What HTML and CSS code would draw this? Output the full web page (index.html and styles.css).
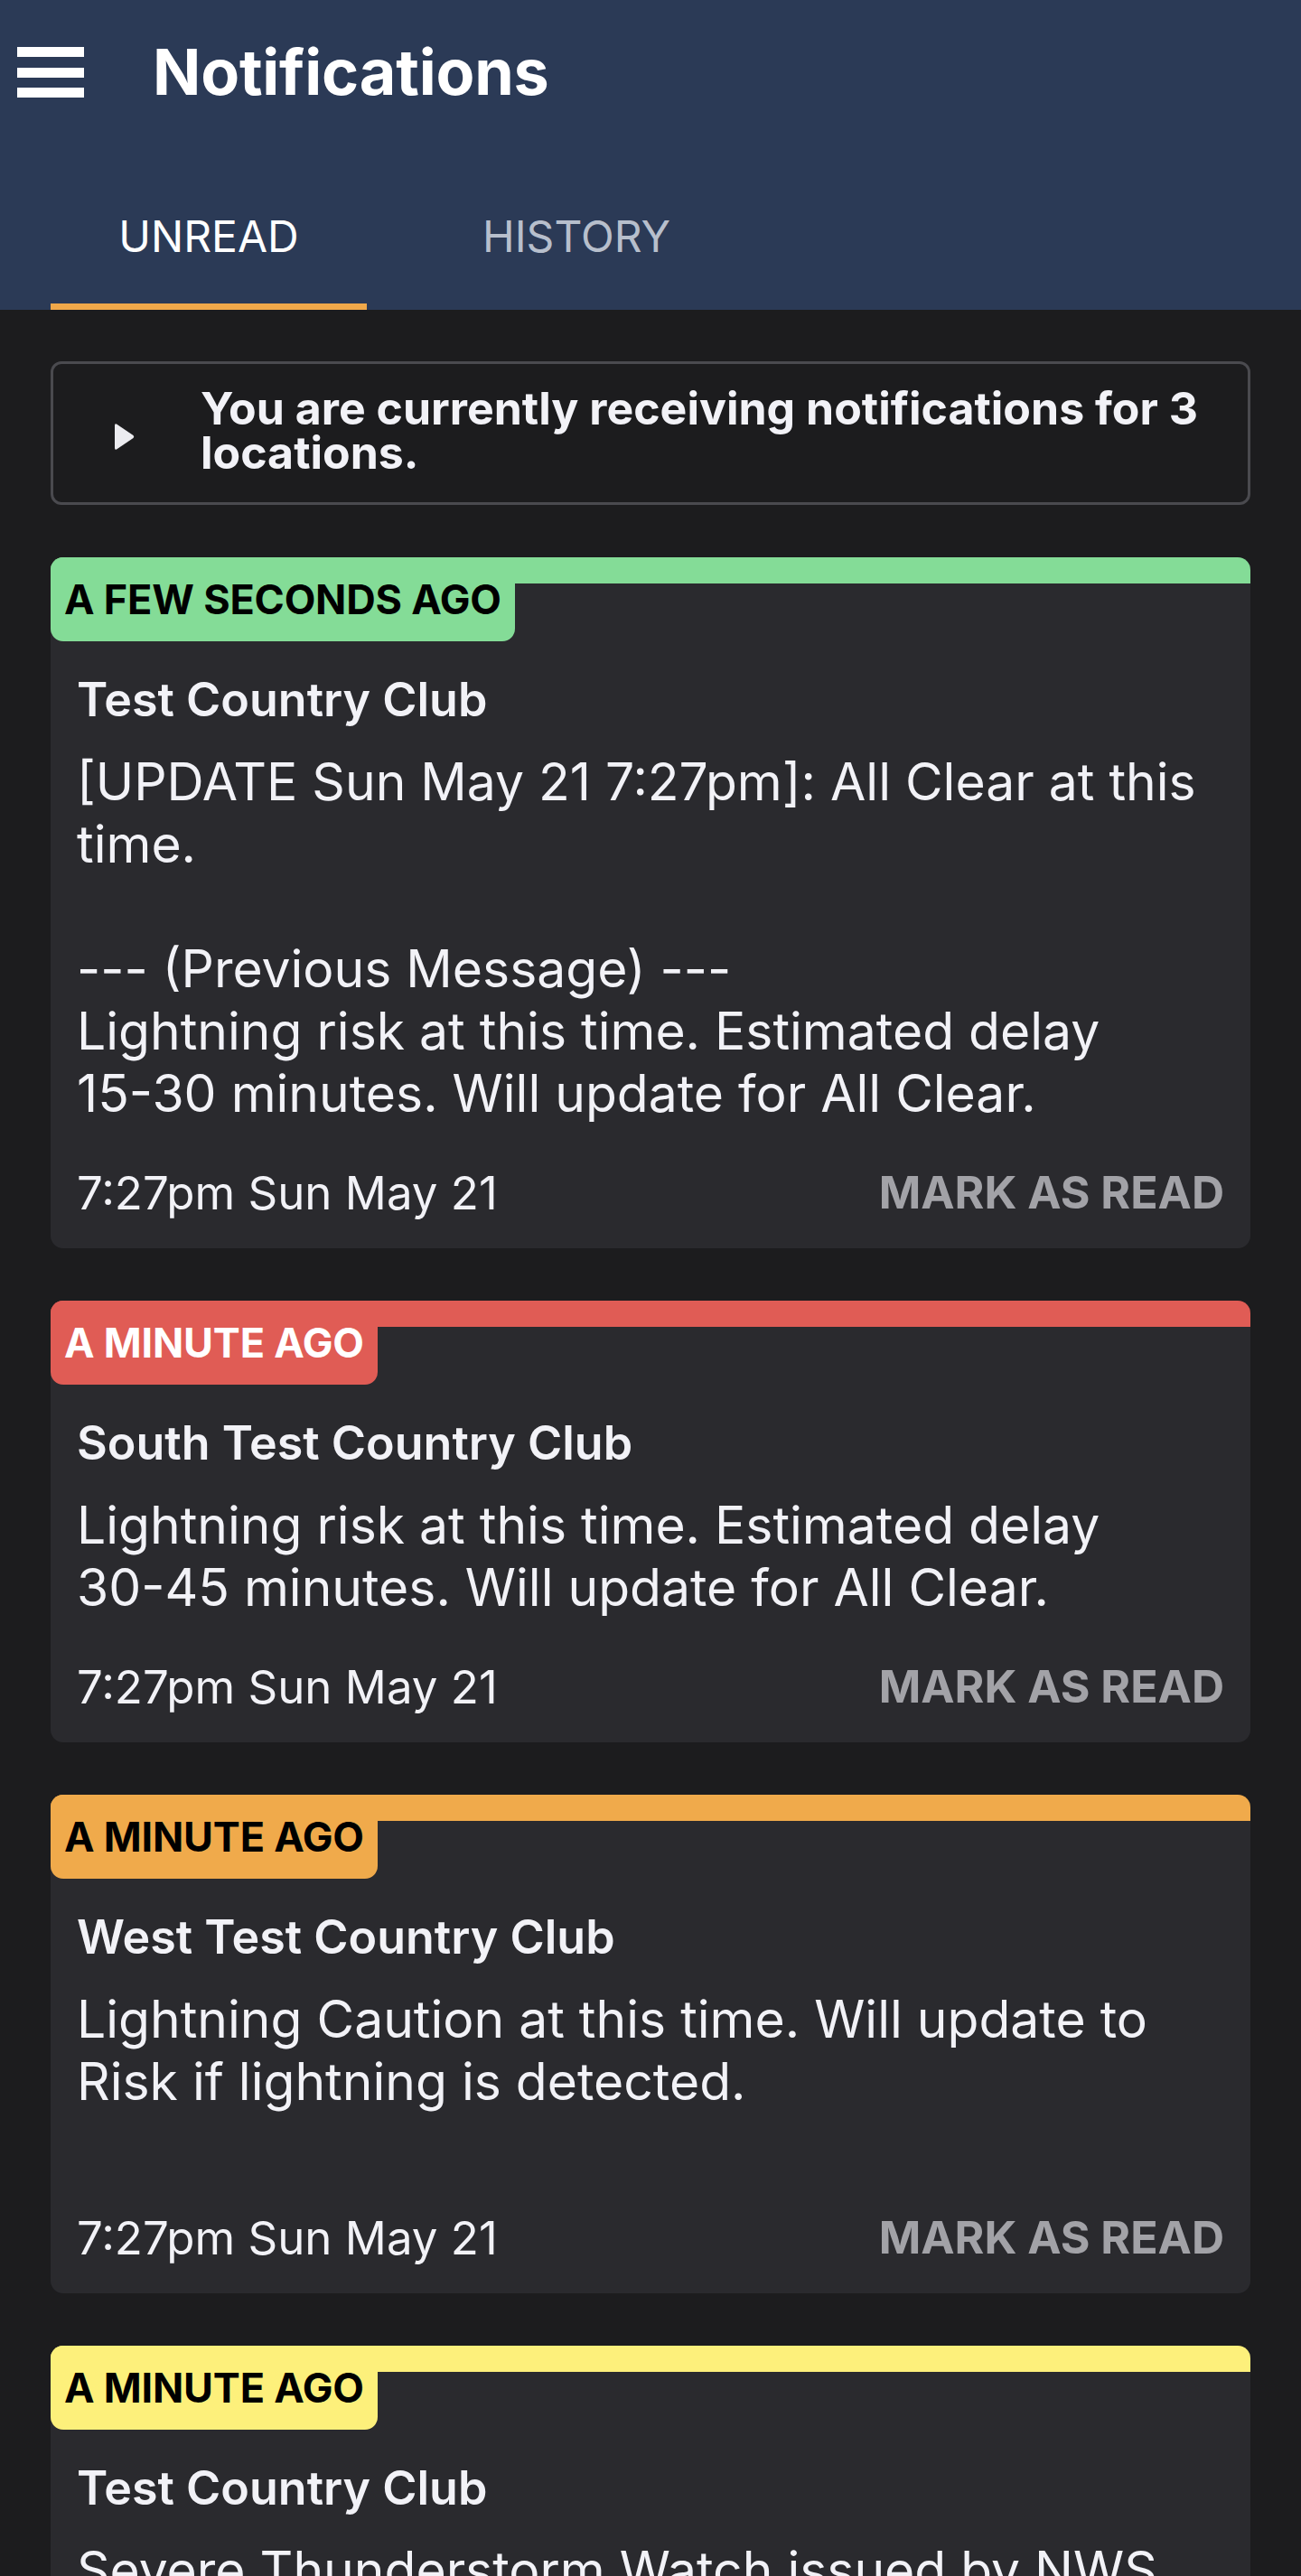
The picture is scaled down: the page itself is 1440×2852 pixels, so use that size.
FILE: index.html
```html
<!DOCTYPE html>
<html lang="en">
<head>
<meta charset="utf-8">
<title>Notifications</title>
<link rel="stylesheet" href="styles.css">
</head>
<body>
<header class="appbar">
  <div class="toolbar">
    <button class="menu-btn" aria-label="Menu">
      <span class="bar"></span><span class="bar"></span><span class="bar"></span>
    </button>
    <h1 class="title">Notifications</h1>
  </div>
  <nav class="tabs">
    <div class="tab tab-active">UNREAD</div>
    <div class="tab tab-second">HISTORY</div>
  </nav>
</header>

<main class="content">
  <div class="info-box">
    <svg class="caret" viewBox="0 0 22 31" width="22" height="31" aria-hidden="true">
      <path d="M2 1.5 L20.5 14 Q22 15.5 20.5 17 L2 29.5 Q0 30.5 0 28 L0 3 Q0 0.5 2 1.5 Z" fill="#ececf0"/>
    </svg>
    <p class="info-text">You are currently receiving notifications for 3 locations.</p>
  </div>

  <article class="card card-green">
    <div class="badge">A FEW SECONDS AGO</div>
    <h2 class="card-title">Test Country Club</h2>
    <p class="card-body">[UPDATE Sun May 21 7:27pm]: All Clear at this time.

--- (Previous Message) ---
Lightning risk at this time. Estimated delay <span class="nowrap">15-30</span> minutes. Will update for All Clear.</p>
    <div class="card-footer">
      <span class="date">7:27pm Sun May 21</span>
      <span class="mark">MARK AS READ</span>
    </div>
  </article>

  <article class="card card-red">
    <div class="badge">A MINUTE AGO</div>
    <h2 class="card-title">South Test Country Club</h2>
    <p class="card-body">Lightning risk at this time. Estimated delay <span class="nowrap">30-45</span> minutes. Will update for All Clear.</p>
    <div class="card-footer">
      <span class="date">7:27pm Sun May 21</span>
      <span class="mark">MARK AS READ</span>
    </div>
  </article>

  <article class="card card-orange">
    <div class="badge">A MINUTE AGO</div>
    <h2 class="card-title">West Test Country Club</h2>
    <p class="card-body card-body-trailing">Lightning Caution at this time. Will update to Risk if lightning is detected.</p>
    <div class="card-footer">
      <span class="date">7:27pm Sun May 21</span>
      <span class="mark">MARK AS READ</span>
    </div>
  </article>

  <article class="card card-yellow">
    <div class="badge">A MINUTE AGO</div>
    <h2 class="card-title">Test Country Club</h2>
    <p class="card-body">Severe Thunderstorm Watch issued by NWS Birmingham until 10:00pm CDT.</p>
    <div class="card-footer">
      <span class="date">7:26pm Sun May 21</span>
      <span class="mark">MARK AS READ</span>
    </div>
  </article>
</main>
</body>
</html>
```

FILE: styles.css
```css
* {
  box-sizing: border-box;
}

html, body {
  margin: 0;
  padding: 0;
}

body {
  background: #1c1c1e;
  font-family: "Inter", "Roboto", "Liberation Sans", sans-serif;
  color: #f2f2f7;
  width: 1440px;
  overflow: hidden;
}

/* ---------- App bar ---------- */
.appbar {
  background: #2b3a56;
  height: 343px;
  display: flex;
  flex-direction: column;
}

.toolbar {
  height: 180px;
  display: flex;
  align-items: center;
  padding: 0 0 20px 19px;
}

.menu-btn {
  background: none;
  border: 0;
  padding: 0;
  width: 74px;
  height: 56px;
  display: flex;
  flex-direction: column;
  justify-content: space-between;
  cursor: pointer;
}

.menu-btn .bar {
  display: block;
  height: 11px;
  width: 74px;
  background: #ffffff;
}

.title {
  margin: 0 0 0 76px;
  font-size: 70px;
  font-weight: 700;
  color: #ffffff;
  letter-spacing: -0.2px;
  line-height: 1;
}

.tabs {
  height: 163px;
  display: flex;
  padding-left: 56px;
}

.tab {
  width: 350px;
  height: 163px;
  padding-top: 6px;
  display: flex;
  align-items: center;
  justify-content: center;
  font-size: 48px;
  font-weight: 400;
  color: #b7bfcc;
  border-bottom: 7px solid transparent;
}

.tab-active {
  color: #ffffff;
  border-bottom-color: #f0a84a;
}

.tab-second {
  margin-left: 57px;
}

/* ---------- Content ---------- */
.content {
  padding: 57px 56px 0;
  display: flex;
  flex-direction: column;
  gap: 58px;
}

.info-box {
  height: 159px;
  border: 3px solid #4a4a4f;
  border-radius: 12px;
  display: flex;
  align-items: center;
  padding: 0 40px 0 68px;
  gap: 73px;
}

.caret {
  flex: none;
  margin-top: 8px;
}

.info-text {
  margin: -6px 0 0;
  font-size: 50px;
  font-weight: 700;
  line-height: 49px;
  color: #f2f2f7;
}

/* ---------- Cards ---------- */
.card {
  --accent: #84dc97;
  --badge-text: #000000;
  background:
    linear-gradient(var(--accent), var(--accent)) top left / 100% 29px no-repeat,
    #2a2a2e;
  border-radius: 14px;
  overflow: hidden;
  padding-bottom: 31px;
}

.card-green { --accent: #84dc97; }
.card-red { --accent: #e05c55; --badge-text: #ffffff; }
.card-orange { --accent: #f0aa4b; }
.card-yellow { --accent: #fdf07b; }

.badge {
  width: fit-content;
  height: 93px;
  background: var(--accent);
  color: var(--badge-text);
  border-radius: 0 0 14px 14px;
  padding: 0 15px 0 15px;
  font-size: 45px;
  font-weight: 700;
  line-height: 93px;
  letter-spacing: -0.2px;
}

.card-title {
  margin: 34px 29px 0;
  font-size: 52px;
  font-weight: 600;
  line-height: 62px;
  color: #f2f2f7;
}

.card-body {
  margin: 25px 29px 0;
  font-size: 57px;
  font-weight: 400;
  line-height: 69px;
  white-space: pre-line;
  color: #f2f2f7;
}

.card-body-trailing {
  padding-bottom: 63px;
}

.nowrap {
  white-space: nowrap;
}

.card-footer {
  margin: 44px 29px 0;
  height: 62px;
  display: flex;
  align-items: center;
  justify-content: space-between;
}

.date {
  font-size: 51px;
  font-weight: 400;
  color: #f2f2f7;
}

.mark {
  font-size: 50px;
  font-weight: 700;
  color: #a2a2a7;
}
```
